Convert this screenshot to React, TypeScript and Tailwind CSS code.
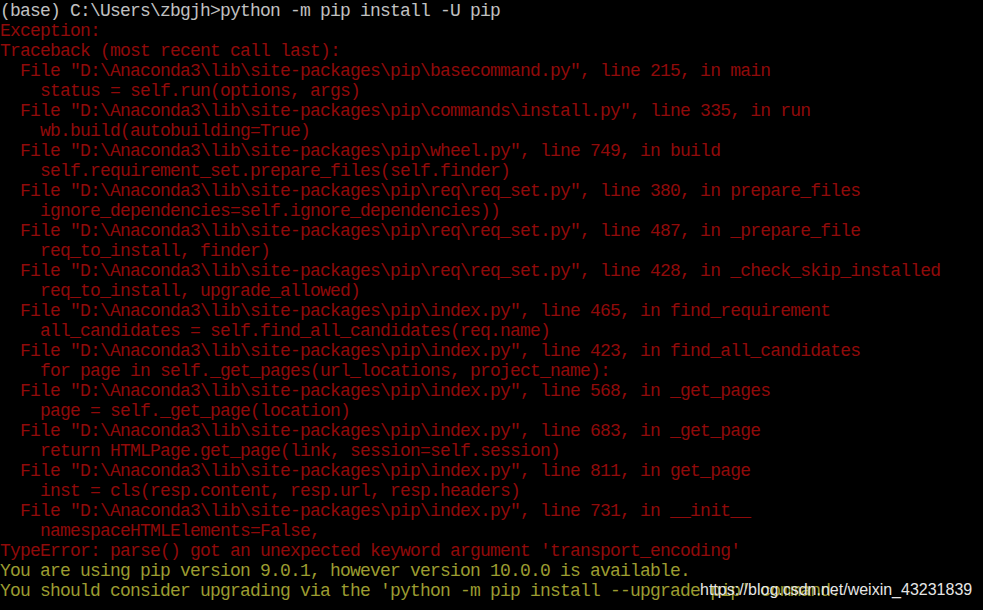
import React from "react";

const white = "text-[#c0c0c0]";
const red = "text-[#900a0a]";
const olive = "text-[#9c9c30]";

const lines: { text: string; color: string }[] = [
    { text: "(base) C:\\Users\\zbgjh>python -m pip install -U pip", color: white },
    { text: "Exception:", color: red },
    { text: "Traceback (most recent call last):", color: red },
    { text: '  File "D:\\Anaconda3\\lib\\site-packages\\pip\\basecommand.py", line 215, in main', color: red },
    { text: "    status = self.run(options, args)", color: red },
    { text: '  File "D:\\Anaconda3\\lib\\site-packages\\pip\\commands\\install.py", line 335, in run', color: red },
    { text: "    wb.build(autobuilding=True)", color: red },
    { text: '  File "D:\\Anaconda3\\lib\\site-packages\\pip\\wheel.py", line 749, in build', color: red },
    { text: "    self.requirement_set.prepare_files(self.finder)", color: red },
    { text: '  File "D:\\Anaconda3\\lib\\site-packages\\pip\\req\\req_set.py", line 380, in prepare_files', color: red },
    { text: "    ignore_dependencies=self.ignore_dependencies))", color: red },
    { text: '  File "D:\\Anaconda3\\lib\\site-packages\\pip\\req\\req_set.py", line 487, in _prepare_file', color: red },
    { text: "    req_to_install, finder)", color: red },
    { text: '  File "D:\\Anaconda3\\lib\\site-packages\\pip\\req\\req_set.py", line 428, in _check_skip_installed', color: red },
    { text: "    req_to_install, upgrade_allowed)", color: red },
    { text: '  File "D:\\Anaconda3\\lib\\site-packages\\pip\\index.py", line 465, in find_requirement', color: red },
    { text: "    all_candidates = self.find_all_candidates(req.name)", color: red },
    { text: '  File "D:\\Anaconda3\\lib\\site-packages\\pip\\index.py", line 423, in find_all_candidates', color: red },
    { text: "    for page in self._get_pages(url_locations, project_name):", color: red },
    { text: '  File "D:\\Anaconda3\\lib\\site-packages\\pip\\index.py", line 568, in _get_pages', color: red },
    { text: "    page = self._get_page(location)", color: red },
    { text: '  File "D:\\Anaconda3\\lib\\site-packages\\pip\\index.py", line 683, in _get_page', color: red },
    { text: "    return HTMLPage.get_page(link, session=self.session)", color: red },
    { text: '  File "D:\\Anaconda3\\lib\\site-packages\\pip\\index.py", line 811, in get_page', color: red },
    { text: "    inst = cls(resp.content, resp.url, resp.headers)", color: red },
    { text: '  File "D:\\Anaconda3\\lib\\site-packages\\pip\\index.py", line 731, in __init__', color: red },
    { text: "    namespaceHTMLElements=False,", color: red },
    { text: "TypeError: parse() got an unexpected keyword argument 'transport_encoding'", color: red },
    { text: "You are using pip version 9.0.1, however version 10.0.0 is available.", color: olive },
    { text: "You should consider upgrading via the 'python -m pip install --upgrade pip' command.", color: olive },
];

const App: React.FC = () => {
    return (
        <div className="relative w-[983px] h-[610px] overflow-hidden bg-black pt-px">
            <div className="font-['Liberation_Mono',monospace] text-[18px] tracking-[-0.8px] leading-[20px] whitespace-pre">
                {lines.map((l, i) => (
                    <div key={i} className={l.color}>
                        {l.text}
                    </div>
                ))}
            </div>

            {/* csdn watermark, sits over the last line like in the screenshot */}
            <div className="absolute left-[700px] top-[579px] font-['Liberation_Sans',Arial,sans-serif] text-[16px] leading-[22px] text-[#e6e6e6]">
                https://blog.csdn.net/weixin_43231839
            </div>
        </div>
    );
};

export default App;
